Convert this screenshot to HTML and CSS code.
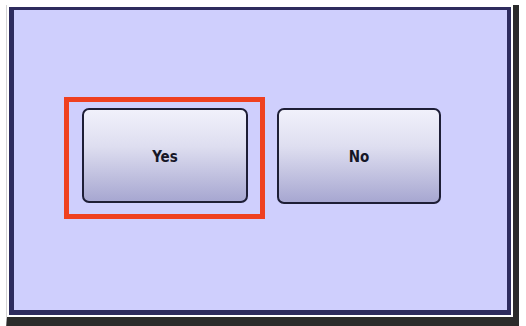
FILE: index.html
```html
<!DOCTYPE html>
<html>
<head>
<meta charset="utf-8">
<link rel="stylesheet" href="styles.css">
</head>
<body>
<div class="frame">
  <div class="panel">
    <div class="row">
      <div class="highlight">
        <button class="btn">Yes</button>
      </div>
      <button class="btn btn-no">No</button>
    </div>
  </div>
</div>
</body>
</html>
```
FILE: styles.css
```css
html, body {
  margin: 0;
  padding: 0;
  background: #ffffff;
  width: 526px;
  height: 326px;
  overflow: hidden;
}
.frame {
  margin: 5px 0 0 6px;
  width: 502px;
  padding: 2px;
  background: #ffffff;
  border-left: 1px solid #d4d4d4;
  border-right: 6px solid #2b2b2b;
  border-bottom: 12px solid #2b2b2b;
}
.panel {
  box-sizing: border-box;
  width: 502px;
  height: 308px;
  background: #cfcffd;
  border-style: solid;
  border-color: #2e2c5e;
  border-width: 3px 4px 5px 5px;
  padding: 87px 0 0 50px;
}
.row {
  display: flex;
  align-items: flex-start;
}
.highlight {
  border: 5px solid #ef4020;
  padding: 6px 12px 11px 13px;
}
.btn {
  box-sizing: border-box;
  width: 166px;
  height: 95px;
  margin: 0;
  padding: 2px 0 0;
  border: 2px solid #1e1e36;
  border-radius: 7px;
  background: linear-gradient(to bottom, #f1f1fb 0%, #dedef0 40%, #a7a7d1 100%);
  font-family: "DejaVu Sans Condensed", "DejaVu Sans", sans-serif;
  font-stretch: condensed;
  font-weight: bold;
  font-size: 15px;
  color: #161626;
  text-align: center;
}
.btn-no {
  width: 164px;
  height: 96px;
  margin: 11px 0 0 12px;
}
```
